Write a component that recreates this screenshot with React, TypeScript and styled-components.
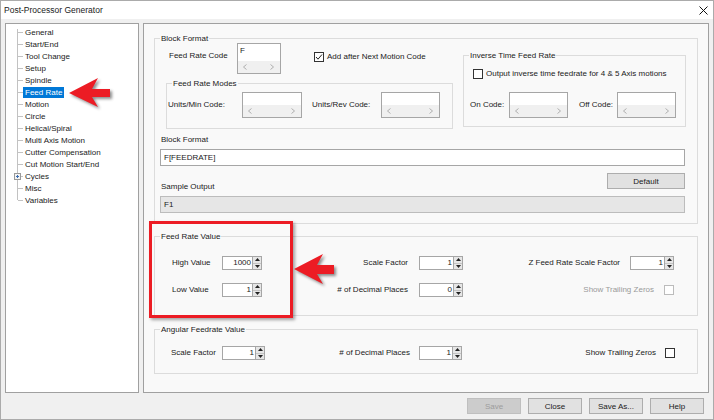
import React from 'react'
import styled, { createGlobalStyle } from 'styled-components'

const GlobalStyle = createGlobalStyle`
  html, body { margin: 0; padding: 0; background: #f0f0f0; }
  body {
    font-family: "Liberation Sans", Arial, sans-serif;
    font-size: 8px;
    color: #1a1a1a;
  }
  *, *::before, *::after { box-sizing: border-box; }
`

const Window = styled.div`
  position: relative;
  width: 714px;
  height: 420px;
  border: 1px solid #ababab;
  background: #f0f0f0;
  display: flex;
  flex-direction: column;
  overflow: hidden;
`

const TitleBar = styled.div`
  flex: none;
  height: 18px;
  background: #fff;
  display: flex;
  align-items: center;
  justify-content: space-between;
  padding: 0 5px 0 3px;
  font-size: 8.5px;
`

const Body = styled.div`
  flex: none;
  height: 370px;
  margin-top: 4px;
  padding: 0 4px;
  display: flex;
  gap: 4px;
`

const Tree = styled.ul`
  width: 134px;
  flex: none;
  margin: 0;
  padding: 2px 0 0;
  list-style: none;
  background: #fff;
  border: 1px solid #a0a0a0;
`

const TreeRow = styled.li`
  height: 12px;
  display: flex;
  align-items: center;
`

const Twig = styled.span<{ $first?: boolean; $last?: boolean }>`
  position: relative;
  flex: none;
  width: 17px;
  height: 12px;
  &::before {
    content: '';
    position: absolute;
    left: 11px;
    top: ${p => (p.$first ? '3px' : '0')};
    height: ${p => (p.$last ? '6px' : p.$first ? '9px' : '12px')};
    border-left: 1px solid #c2c2c2;
  }
  &::after {
    content: '';
    position: absolute;
    left: 12px;
    top: 6px;
    width: 5px;
    border-top: 1px solid #c2c2c2;
  }
  svg {
    position: absolute;
    left: 8px;
    top: 3px;
    z-index: 1;
  }
`

const TreeLabel = styled.span<{ $selected?: boolean }>`
  height: 11px;
  line-height: 11px;
  padding: 0 2px;
  white-space: nowrap;
  background: ${p => (p.$selected ? '#0078d7' : 'transparent')};
  color: ${p => (p.$selected ? '#fff' : 'inherit')};
`

const Panel = styled.div`
  flex: 1;
  border: 1px solid #a0a0a0;
  background: #f9f9f9;
  padding: 10px 10px 0;
  display: flex;
  flex-direction: column;
`

const Group = styled.fieldset<{ $h: number; $w?: number }>`
  margin: 0;
  padding: 0;
  min-width: 0;
  flex: none;
  border: 1px solid #dcdcdc;
  height: ${p => p.$h}px;
  width: ${p => (p.$w ? `${p.$w}px` : 'auto')};
`

const Caption = styled.legend`
  margin-left: 5px;
  padding: 0 1px;
  font-size: 8px;
  line-height: 9px;
`

const ValueGroup = styled(Group)<{ $mt: number }>`
  margin-top: ${p => p.$mt}px;
`

const TopSection = styled.div`
  display: flex;
  align-items: flex-start;
`

const LeftCol = styled.div`
  width: 298px;
  flex: none;
`

const CodeRow = styled.div`
  display: flex;
  align-items: flex-start;
  height: 31px;
`

const CodeLabel = styled.span`
  width: 68px;
  margin: 8px 0 0 14px;
  line-height: 10px;
`

const CheckLine = styled.label<{ $top: number; $left: number }>`
  display: flex;
  align-items: center;
  gap: 3px;
  margin: ${p => p.$top}px 0 0 ${p => p.$left}px;
  line-height: 10px;
  white-space: nowrap;
`

const ModesGroup = styled(Group)`
  margin: 5px 0 0 11px;
`

const InverseGroup = styled(Group)`
  margin: 8px 0 0 10px;
`

const FieldRow = styled.div<{ $top: number }>`
  display: flex;
  align-items: center;
  height: 26px;
  margin-top: ${p => p.$top}px;
`

const FieldLabel = styled.span<{ $w: number; $ml: number }>`
  flex: none;
  width: ${p => p.$w}px;
  margin-left: ${p => p.$ml}px;
  line-height: 10px;
  white-space: nowrap;
`

const MultiBox = styled.div<{ $w: number; $h: number }>`
  flex: none;
  width: ${p => p.$w}px;
  height: ${p => p.$h}px;
  border: 1px solid #a6a6a6;
  background: #fff;
  display: flex;
  flex-direction: column;
`

const MultiText = styled.div`
  flex: 1;
  padding: 2px 2px 0;
  line-height: 10px;
`

const HScroll = styled.div`
  height: 12px;
  background: #f0f0f0;
  display: flex;
  align-items: center;
  justify-content: space-between;
  padding: 0 6px 0 5px;
`

const BlockLabel = styled.div`
  margin: 6px 0 0 6px;
  line-height: 10px;
`

const LineField = styled.div<{ $readonly?: boolean }>`
  margin: 4px 0 0 5px;
  width: 525px;
  height: 17px;
  border: 1px solid ${p => (p.$readonly ? '#bcbcbc' : '#a6a6a6')};
  background: ${p => (p.$readonly ? '#e6e6e6' : '#fff')};
  padding-left: 3px;
  line-height: 15px;
`

const SampleRow = styled.div`
  display: flex;
  justify-content: space-between;
  align-items: flex-start;
  margin-top: 7px;
  padding: 0 12px 0 6px;
`

const SampleLabel = styled.span`
  margin-top: 9px;
  line-height: 10px;
`

const Button = styled.button<{ $w: number }>`
  width: ${p => p.$w}px;
  height: 16px;
  padding: 0;
  margin: 0;
  border: 1px solid #adadad;
  background: #e1e1e1;
  font-family: inherit;
  font-size: 8px;
  color: #1a1a1a;
  &:disabled {
    border-color: #bfbfbf;
    background: #cccccc;
    color: #9c9c9c;
  }
`

const ValueGrid = styled.div<{ $cols: string; $pt: number; $pl: number }>`
  display: grid;
  grid-template-columns: ${p => p.$cols};
  grid-auto-rows: 14px;
  row-gap: 13px;
  align-items: center;
  padding: ${p => p.$pt}px 0 0 ${p => p.$pl}px;
`

const CellLabel = styled.span<{ $right?: boolean; $pr?: number; $muted?: boolean }>`
  line-height: 10px;
  white-space: nowrap;
  text-align: ${p => (p.$right ? 'right' : 'left')};
  padding-right: ${p => p.$pr ?? 0}px;
  color: ${p => (p.$muted ? '#9a9a9a' : 'inherit')};
`

const TrailCell = styled.div<{ $col: string; $gap: number }>`
  grid-column: ${p => p.$col};
  justify-self: end;
  display: flex;
  align-items: center;
  gap: ${p => p.$gap}px;
`

const SpinWrap = styled.div<{ $w: number }>`
  display: flex;
  width: ${p => p.$w}px;
  height: 14px;
`

const SpinField = styled.div`
  flex: 1;
  border: 1px solid #a6a6a6;
  border-right: none;
  background: #fff;
  text-align: right;
  padding-right: 1px;
  line-height: 12px;
`

const SpinArrows = styled.div`
  width: 10px;
  flex: none;
  display: flex;
  flex-direction: column;
  border: 1px solid #a6a6a6;
  background: #e6e6e6;
`

const SpinArrow = styled.div<{ $down?: boolean }>`
  flex: 1;
  display: flex;
  align-items: center;
  justify-content: center;
  border-top: ${p => (p.$down ? '1px solid #c4c4c4' : 'none')};
`

const Box = styled.span<{ $disabled?: boolean }>`
  flex: none;
  width: 10px;
  height: 10px;
  border: 1px solid ${p => (p.$disabled ? '#bcbcbc' : '#333')};
  background: #fff;
  display: flex;
  align-items: center;
  justify-content: center;
`

const Footer = styled.div`
  flex: none;
  display: flex;
  justify-content: flex-end;
  gap: 7px;
  padding: 5px 9px 0 0;
`

const Highlight = styled.div`
  position: absolute;
  left: 148px;
  top: 220px;
  width: 144px;
  height: 97px;
  border: 3px solid #ec1c24;
  box-shadow: 2px 2px 3px rgba(0, 0, 0, 0.35);
  pointer-events: none;
`

const Pointer = styled.svg<{ $x: number; $y: number }>`
  position: absolute;
  left: ${p => p.$x}px;
  top: ${p => p.$y}px;
  overflow: visible;
  filter: drop-shadow(2px 2px 1.5px rgba(0, 0, 0, 0.45));
  pointer-events: none;
`

const treeItems = [
  'General', 'Start/End', 'Tool Change', 'Setup', 'Spindle', 'Feed Rate', 'Motion', 'Circle',
  'Helical/Spiral', 'Multi Axis Motion', 'Cutter Compensation', 'Cut Motion Start/End',
  'Cycles', 'Misc', 'Variables',
]

const Chevron = ({ right }: { right?: boolean }) => (
  <svg width="4" height="6" viewBox="0 0 4 6">
    <polyline points={right ? '0.5,0.5 3.5,3 0.5,5.5' : '3.5,0.5 0.5,3 3.5,5.5'} fill="none" stroke="#a8a8a8" strokeWidth="0.9" />
  </svg>
)

const ScrollBox = ({ w, h, text }: { w: number; h: number; text?: string }) => (
  <MultiBox $w={w} $h={h}>
    <MultiText>{text}</MultiText>
    <HScroll>
      <Chevron />
      <Chevron right />
    </HScroll>
  </MultiBox>
)

const Spinner = ({ value, w }: { value: string; w: number }) => (
  <SpinWrap $w={w}>
    <SpinField>{value}</SpinField>
    <SpinArrows>
      <SpinArrow>
        <svg width="5" height="3" viewBox="0 0 5 3"><polygon points="0,3 2.5,0 5,3" fill="#222" /></svg>
      </SpinArrow>
      <SpinArrow $down>
        <svg width="5" height="3" viewBox="0 0 5 3"><polygon points="0,0 5,0 2.5,3" fill="#222" /></svg>
      </SpinArrow>
    </SpinArrows>
  </SpinWrap>
)

const Check = ({ checked, disabled }: { checked?: boolean; disabled?: boolean }) => (
  <Box $disabled={disabled}>
    {checked && (
      <svg width="8" height="8" viewBox="0 0 8 8">
        <polyline points="1,4 3,6.2 7,1.5" fill="none" stroke="#222" strokeWidth="1" />
      </svg>
    )}
  </Box>
)

export default function App() {
  return (
    <>
      <GlobalStyle />
      <Window>
        <TitleBar>
          <span>Post-Processor Generator</span>
          <svg width="9" height="9" viewBox="0 0 9 9">
            <path d="M0.5 0.5 L8.5 8.5 M8.5 0.5 L0.5 8.5" stroke="#111" strokeWidth="1" />
          </svg>
        </TitleBar>

        <Body>
          <Tree>
            {treeItems.map((item, i) => (
              <TreeRow key={item}>
                <Twig $first={i === 0} $last={i === treeItems.length - 1}>
                  {item === 'Cycles' && (
                    <svg width="7" height="7" viewBox="0 0 7 7">
                      <rect x="0.5" y="0.5" width="6" height="6" fill="#f4f4f4" stroke="#9a9a9a" />
                      <path d="M2 3.5 H5 M3.5 2 V5" stroke="#3a6cb0" strokeWidth="1" />
                    </svg>
                  )}
                </Twig>
                <TreeLabel $selected={item === 'Feed Rate'}>{item}</TreeLabel>
              </TreeRow>
            ))}
          </Tree>

          <Panel>
            <Group $h={190}>
              <Caption>Block Format</Caption>
              <TopSection>
                <LeftCol>
                  <CodeRow>
                    <CodeLabel>Feed Rate Code</CodeLabel>
                    <ScrollBox w={44} h={31} text="F" />
                    <CheckLine $top={9} $left={33}>
                      <Check checked />
                      Add after Next Motion Code
                    </CheckLine>
                  </CodeRow>
                  <ModesGroup $h={50} $w={287}>
                    <Caption>Feed Rate Modes</Caption>
                    <FieldRow $top={4}>
                      <FieldLabel $w={74} $ml={1}>Units/Min Code:</FieldLabel>
                      <ScrollBox w={60} h={26} />
                      <FieldLabel $w={69} $ml={10}>Units/Rev Code:</FieldLabel>
                      <ScrollBox w={59} h={26} />
                    </FieldRow>
                  </ModesGroup>
                </LeftCol>
                <InverseGroup $h={76} $w={223}>
                  <Caption>Inverse Time Feed Rate</Caption>
                  <CheckLine $top={9} $left={9}>
                    <Check />
                    Output inverse time feedrate for 4 &amp; 5 Axis motions
                  </CheckLine>
                  <FieldRow $top={13}>
                    <FieldLabel $w={39} $ml={6}>On Code:</FieldLabel>
                    <ScrollBox w={59} h={26} />
                    <FieldLabel $w={38} $ml={11}>Off Code:</FieldLabel>
                    <ScrollBox w={59} h={26} />
                  </FieldRow>
                </InverseGroup>
              </TopSection>
              <BlockLabel>Block Format</BlockLabel>
              <LineField>F[FEEDRATE]</LineField>
              <SampleRow>
                <SampleLabel>Sample Output</SampleLabel>
                <Button $w={78}>Default</Button>
              </SampleRow>
              <LineField $readonly>F1</LineField>
            </Group>

            <ValueGroup $h={84} $mt={8}>
              <Caption>Feed Rate Value</Caption>
              <ValueGrid $cols="50px 40px 157px 44px 167px 44px" $pt={15} $pl={17}>
                <CellLabel>High Value</CellLabel>
                <Spinner value="1000" w={40} />
                <CellLabel $right $pr={11}>Scale Factor</CellLabel>
                <Spinner value="1" w={44} />
                <CellLabel $right $pr={10}>Z Feed Rate Scale Factor</CellLabel>
                <Spinner value="1" w={44} />

                <CellLabel>Low Value</CellLabel>
                <Spinner value="1" w={40} />
                <CellLabel $right $pr={11}># of Decimal Places</CellLabel>
                <Spinner value="0" w={44} />
                <TrailCell $col="5 / span 2" $gap={10}>
                  <CellLabel $muted>Show Trailing Zeros</CellLabel>
                  <Check disabled />
                </TrailCell>
              </ValueGrid>
            </ValueGroup>

            <ValueGroup $h={49} $mt={9}>
              <Caption>Angular Feedrate Value</Caption>
              <ValueGrid $cols="51px 43px 154px 43px 213px" $pt={12} $pl={16}>
                <CellLabel>Scale Factor</CellLabel>
                <Spinner value="1" w={43} />
                <CellLabel $right $pr={9}># of Decimal Places</CellLabel>
                <Spinner value="1" w={43} />
                <TrailCell $col="5" $gap={9}>
                  <CellLabel>Show Trailing Zeros</CellLabel>
                  <Check />
                </TrailCell>
              </ValueGrid>
            </ValueGroup>
          </Panel>
        </Body>

        <Footer>
          <Button $w={54} disabled>Save</Button>
          <Button $w={54}>Close</Button>
          <Button $w={54}>Save As...</Button>
          <Button $w={54}>Help</Button>
        </Footer>

        <Highlight />
        <Pointer $x={68} $y={77} width="41" height="29" viewBox="0 0 41 29">
          <polygon points="0,15 29,0 23,11 41,11 41,19 23,19 29,29" fill="#ec1c24" />
        </Pointer>
        <Pointer $x={293} $y={253} width="40" height="30" viewBox="0 0 40 30">
          <polygon points="0,15 29,0 23,11 40,11 40,20 23,20 29,30" fill="#ec1c24" />
        </Pointer>
      </Window>
    </>
  )
}
